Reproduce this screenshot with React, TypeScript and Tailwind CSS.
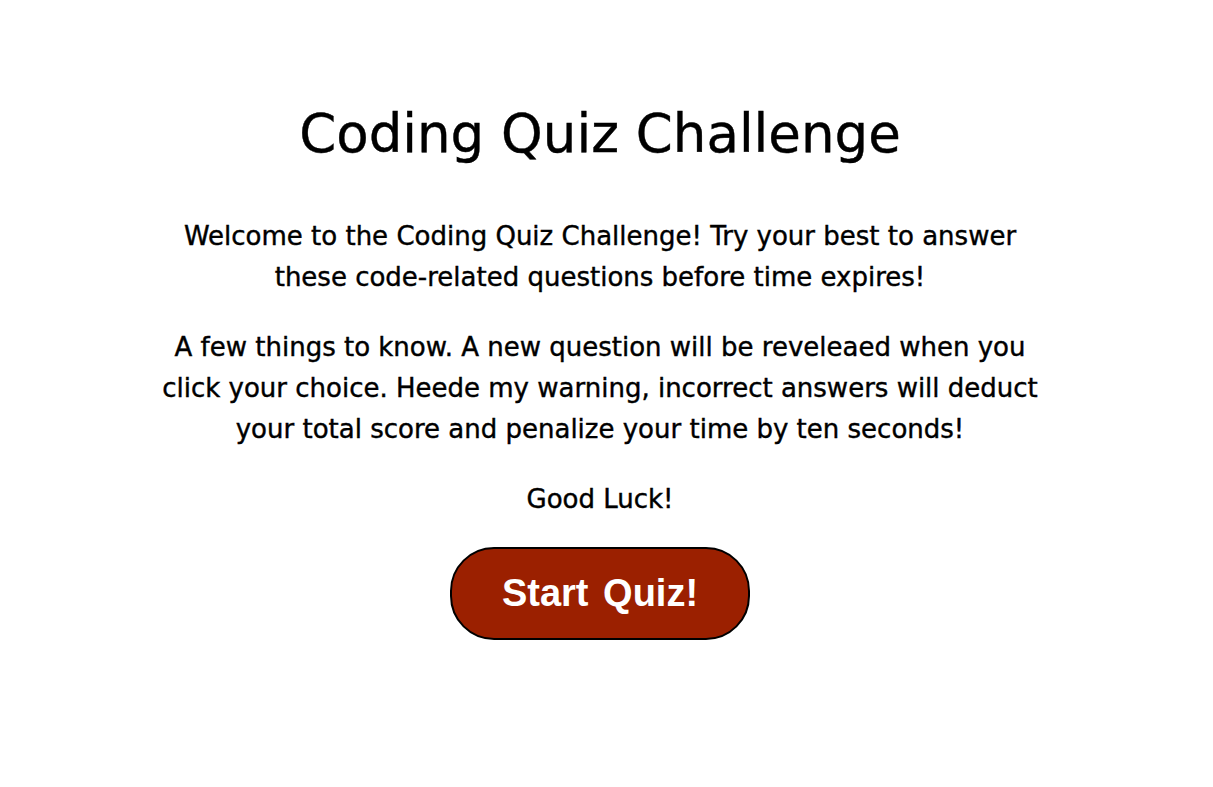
export default function App() {
  return (
    <main className="min-h-screen w-full bg-white pr-[13px] text-black" style={{ fontFamily: '"DejaVu Sans", sans-serif' }}>
      <section className="mx-auto flex w-[900px] flex-col items-center pt-[98px] text-center [-webkit-text-stroke:0.4px_black]">
        <h1 className="text-[53px] leading-[72px]">Coding Quiz Challenge</h1>
        <p className="mt-[46px] text-[26px] leading-[41px]">
          Welcome to the Coding Quiz Challenge! Try your best to answer these code-related questions before time expires!
        </p>
        <p className="mt-[29px] text-[26px] leading-[41px]">
          A few things to know. A new question will be reveleaed when you click your choice. Heede my warning, incorrect answers will deduct your total score and penalize your time by ten seconds!
        </p>
        <p className="mt-[29px] text-[26px] leading-[41px]">Good Luck!</p>
        <button
          className="mt-[27px] h-[93px] w-[300px] rounded-[44px] border-2 border-black bg-[#9b2000] text-[38px] font-bold text-white [-webkit-text-stroke:0px] [word-spacing:4px]"
          style={{ fontFamily: '"Liberation Sans", Arial, sans-serif' }}
        >
          Start Quiz!
        </button>
      </section>
    </main>
  )
}
